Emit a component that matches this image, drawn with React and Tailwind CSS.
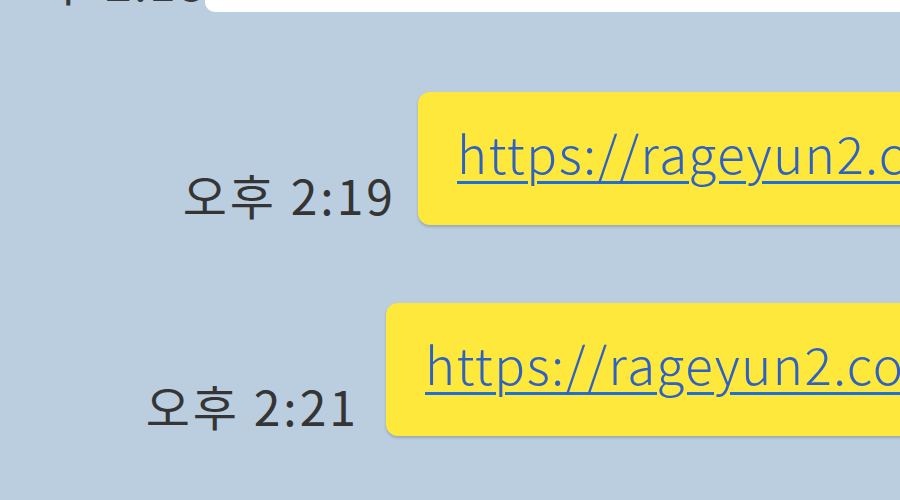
export default function App() {
  return (
    <div className="h-[500px] w-[900px] overflow-hidden bg-[#bacee0] font-['Noto_Sans_CJK_KR',sans-serif]">
      <div className="-mt-[50px] flex items-end">
        <div className="w-[177px] shrink-0 whitespace-nowrap pb-[8px] text-right text-[48px] leading-none tracking-[2px] text-[#3a3a3a]">
          오후 2:18
        </div>
        <div className="ml-[28px] h-[62px] w-[800px] shrink-0 rounded-bl-[10px] bg-white" />
      </div>

      <div className="mt-[80px] flex items-end">
        <div className="w-[396px] shrink-0 whitespace-nowrap pb-[7px] text-right text-[48px] leading-none tracking-[3px] text-[#353535]">
          오후 2:19
        </div>
        <Bubble className="ml-[22px]" />
      </div>

      <div className="mt-[78px] flex items-end">
        <div className="w-[359px] shrink-0 whitespace-nowrap pb-[7px] text-right text-[48px] leading-none tracking-[3px] text-[#353535]">
          오후 2:21
        </div>
        <Bubble className="ml-[27px]" />
      </div>
    </div>
  )
}

function Bubble({ className }) {
  return (
    <div
      className={`h-[133px] w-[700px] shrink-0 rounded-[12px] bg-[#fee83b] pl-[39px] pt-[20px] shadow-[0_2px_3px_rgba(0,0,0,0.18)] ${className}`}
    >
      <span className="whitespace-nowrap text-[51px] font-light leading-[80px] tracking-[1.5px] text-[#2d62c4] underline decoration-[#1f6fd8] decoration-[3px] underline-offset-[7px]">
        https://rageyun2.com/
      </span>
    </div>
  )
}
